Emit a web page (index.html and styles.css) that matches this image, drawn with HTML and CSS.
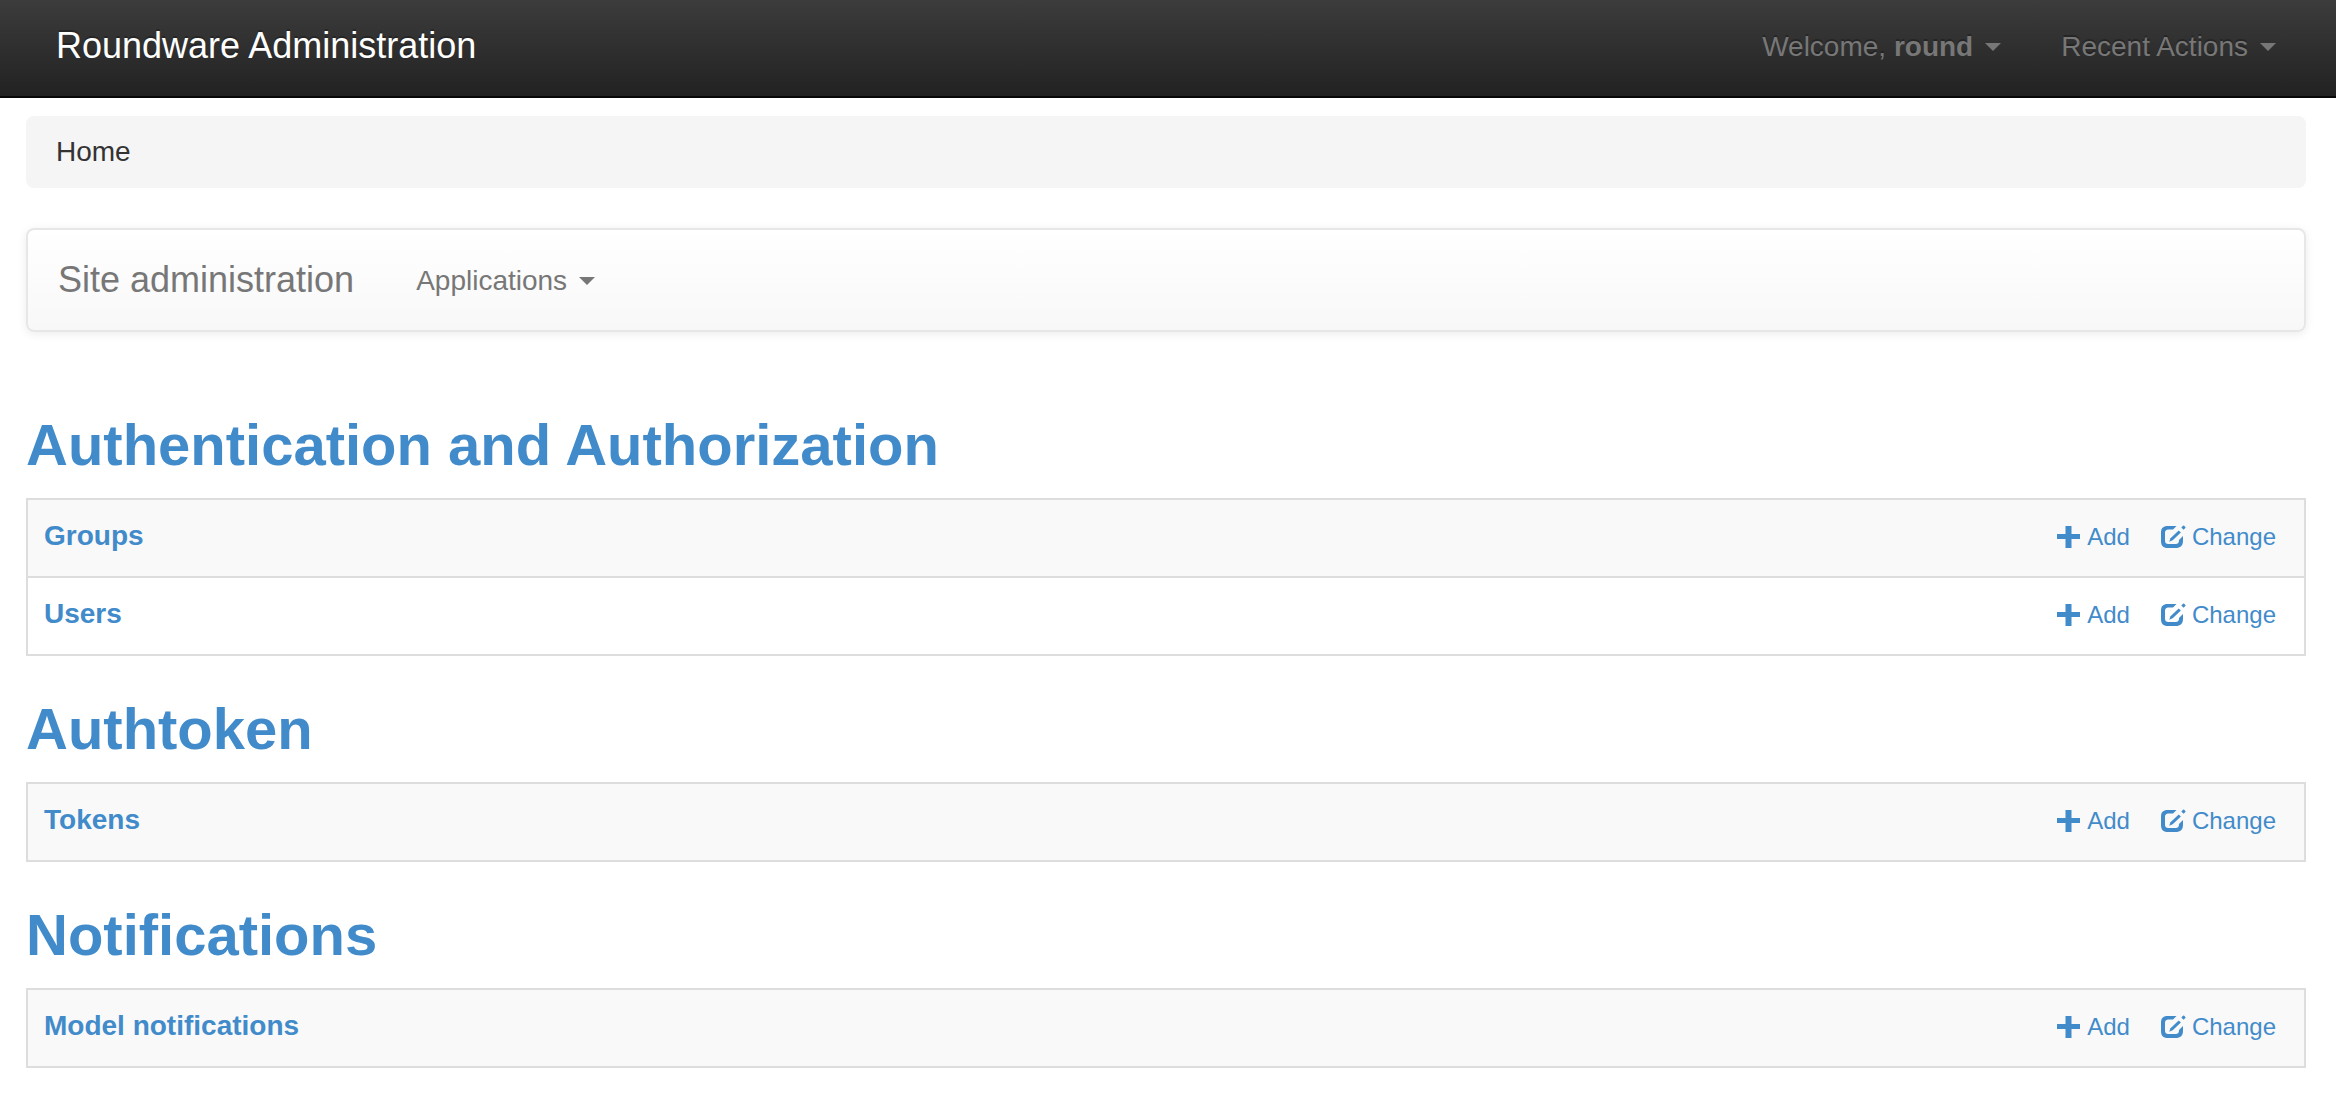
FILE: index.html
```html
<!DOCTYPE html>
<html lang="en">
<head>
<meta charset="utf-8">
<meta name="viewport" content="width=device-width, initial-scale=1">
<title>Site administration | Roundware Administration</title>
<link rel="stylesheet" href="styles.css">
</head>
<body>
<svg class="sprite" aria-hidden="true">
  <symbol id="icon-plus" viewBox="0 0 24 24"><path d="M8.500 1h6v8H23v5h-8.500v9h-6v-9H0V9h8.500z"/></symbol>
  <symbol id="icon-edit" viewBox="0 0 26 24">
    <path d="M16.500 1H8C3 1 1 3 1 8v7.500C1 21 3 23 8 23h7.500c5 0 7.500-2 7.500-7.500V11l-4 4c0 3-1 4-4 4H9c-3 0-4-1-4-4V8.500c0-3 1-4 4-4h4z"/>
    <path d="M18.700 5.400l2.200 2.200-8.200 7.700-3.500 1.500 1.300-3.500z"/>
    <path d="M21.300 2.500l1.700-1.700q.6-.6 1.200 0l1.100 1.100q.6.6 0 1.200l-1.700 1.700z"/>
  </symbol>
</svg>
<header class="topbar">
  <a class="brand" href="#">Roundware Administration</a>
  <nav class="topbar-nav" aria-label="User">
    <button class="menu-toggle" type="button"><span>Welcome, <strong>round</strong></span><span class="caret"></span></button>
    <button class="menu-toggle" type="button"><span>Recent Actions</span><span class="caret"></span></button>
  </nav>
</header>
<div class="container">
  <ol class="breadcrumb"><li>Home</li></ol>
  <nav class="site-nav" aria-label="Site">
    <a class="brand" href="#">Site administration</a>
    <button class="menu-toggle" type="button"><span>Applications</span><span class="caret"></span></button>
  </nav>
  <main>
    <section class="app">
      <h2><a href="#">Authentication and Authorization</a></h2>
      <table class="models">
        <tr>
          <th scope="row"><a href="#">Groups</a></th>
          <td><div class="actions">
            <a href="#"><svg class="icon-plus"><use href="#icon-plus"/></svg>Add</a>
            <a href="#"><svg class="icon-edit"><use href="#icon-edit"/></svg>Change</a>
          </div></td>
        </tr>
        <tr>
          <th scope="row"><a href="#">Users</a></th>
          <td><div class="actions">
            <a href="#"><svg class="icon-plus"><use href="#icon-plus"/></svg>Add</a>
            <a href="#"><svg class="icon-edit"><use href="#icon-edit"/></svg>Change</a>
          </div></td>
        </tr>
      </table>
    </section>
    <section class="app">
      <h2><a href="#">Authtoken</a></h2>
      <table class="models">
        <tr>
          <th scope="row"><a href="#">Tokens</a></th>
          <td><div class="actions">
            <a href="#"><svg class="icon-plus"><use href="#icon-plus"/></svg>Add</a>
            <a href="#"><svg class="icon-edit"><use href="#icon-edit"/></svg>Change</a>
          </div></td>
        </tr>
      </table>
    </section>
    <section class="app">
      <h2><a href="#">Notifications</a></h2>
      <table class="models">
        <tr>
          <th scope="row"><a href="#">Model notifications</a></th>
          <td><div class="actions">
            <a href="#"><svg class="icon-plus"><use href="#icon-plus"/></svg>Add</a>
            <a href="#"><svg class="icon-edit"><use href="#icon-edit"/></svg>Change</a>
          </div></td>
        </tr>
      </table>
    </section>
  </main>
</div>
</body>
</html>
```

FILE: styles.css
```css
* {
  box-sizing: border-box;
}

body {
  margin: 0;
  background: #fff;
  color: #333;
  font-family: "Helvetica Neue", "Liberation Sans", Arial, sans-serif;
  font-size: 28px;
  line-height: 40px;
}

a {
  color: #428bca;
  text-decoration: none;
}

.sprite {
  display: none;
}

.brand {
  color: #777;
  font-size: 36px;
}

.menu-toggle {
  display: flex;
  align-items: center;
  gap: 12px;
  margin: 0;
  padding: 2px 30px 0;
  border: 0;
  background: none;
  color: #777;
  font: inherit;
  text-shadow: inherit;
  cursor: pointer;
}

.caret {
  border-top: 8px solid;
  border-left: 8px solid transparent;
  border-right: 8px solid transparent;
}

/* Top bar */
.topbar {
  display: flex;
  justify-content: space-between;
  align-items: center;
  padding: 25px 30px 29px 56px;
  border-bottom: 2px solid #080808;
  background: linear-gradient(#3c3c3c, #222);
  text-shadow: 0 -2px 0 rgba(0, 0, 0, 0.25);
}

.topbar .brand {
  color: #fff;
}

.topbar-nav {
  display: flex;
}

/* Page */
.container {
  padding: 18px 30px 36px 26px;
}

.breadcrumb {
  margin: 0 0 40px;
  padding: 16px 30px;
  border-radius: 8px;
  background: #f5f5f5;
  list-style: none;
}

.site-nav {
  display: flex;
  align-items: center;
  gap: 32px;
  margin-bottom: 80px;
  padding: 29px 30px;
  border: 2px solid #e7e7e7;
  border-radius: 8px;
  background: linear-gradient(#fff, #f8f8f8);
  box-shadow: 0 2px 10px rgba(0, 0, 0, 0.08);
}

/* Application lists */
.app + .app {
  margin-top: 40px;
}

.app h2 {
  margin: 0 0 20px;
  font-size: 58px;
  font-weight: bold;
  line-height: 66px;
}

.models {
  width: 100%;
  border: 2px solid #ddd;
  border-spacing: 0;
}

.models tr:nth-child(odd) {
  background: #f9f9f9;
}

.models th,
.models td {
  padding: 16px 28px 20px 16px;
}

.models td {
  padding-top: 17px;
  padding-bottom: 19px;
}

.models tr + tr th,
.models tr + tr td {
  border-top: 2px solid #ddd;
}

.models th {
  text-align: left;
}

.actions {
  display: flex;
  justify-content: flex-end;
  gap: 30px;
  font-size: 24px;
}

.actions a {
  display: flex;
  align-items: center;
  gap: 6px;
}

.actions svg {
  height: 24px;
  fill: currentColor;
}

.icon-plus {
  width: 24px;
}

.icon-edit {
  width: 26px;
}
```
